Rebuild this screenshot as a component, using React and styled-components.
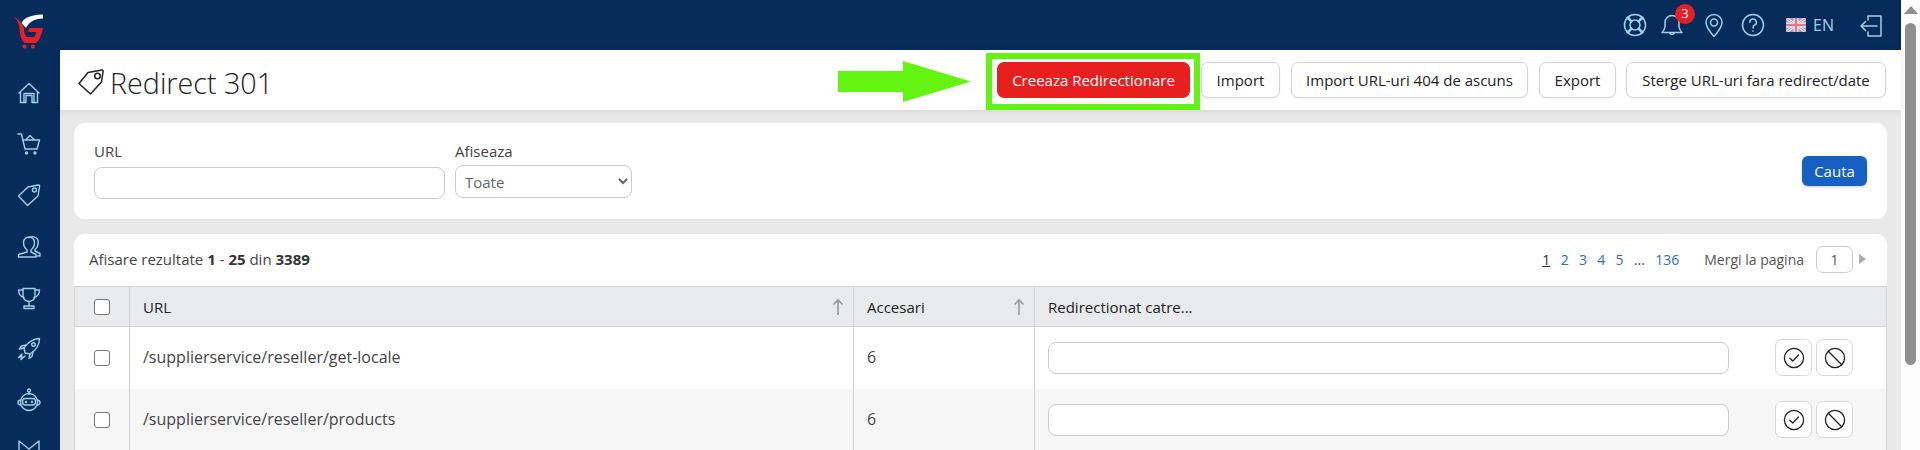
import React from "react";
import styled, { createGlobalStyle } from "styled-components";

const NAVY = "#072c5c";
const ICON = "#9fd0e6";

const Global = createGlobalStyle`
  html, body { margin: 0; padding: 0; height: 100%; overflow: hidden; }
  body { font-family: "Open Sans", "Liberation Sans", sans-serif; color: #333; background: #e9e9e9; }
  #root { height: 100%; }
  * { box-sizing: border-box; }
`;

const Shell = styled.div`display: flex; width: 1920px; height: 450px; overflow: hidden;`;
const Sidebar = styled.aside`width: 60px; flex: none; background: ${NAVY}; overflow: hidden; display: flex; flex-direction: column;`;
const LogoBox = styled.div`height: 50px; flex: none; padding: 14px 0 0 14px; svg { display: block; }`;
const Nav = styled.nav`padding-top: 17px; display: flex; flex-direction: column;`;
const NavItem = styled.a`
  height: 51.3px; flex: none; display: flex; align-items: center; justify-content: center; padding-right: 2px;
  svg { display: block; width: 24px; height: 24px; fill: none; stroke: ${ICON}; stroke-width: 1.4; stroke-linecap: round; stroke-linejoin: round; }
`;
const Main = styled.div`flex: 1; min-width: 0; display: flex; flex-direction: column; background: #e9e9e9;`;
const Header = styled.header`height: 50px; flex: none; background: ${NAVY}; display: flex; align-items: center; justify-content: flex-end; padding-right: 18px;`;
const HeadIcon = styled.span`
  position: relative; display: flex; margin-right: ${p => p.$mr}px;
  svg { display: block; width: ${p => p.$size || 24}px; height: ${p => p.$size || 24}px; fill: none; stroke: ${ICON}; stroke-width: 1.5; stroke-linecap: round; stroke-linejoin: round; }
`;
const Badge = styled.span`
  position: absolute; right: -11px; top: -9px; width: 20px; height: 20px; border-radius: 50%; background: #e81f25; color: #fff;
  font-size: 13px; line-height: 19px; text-align: center;
`;
const Lang = styled.span`display: flex; align-items: center; gap: 7px; color: ${ICON}; font-size: 16px; margin-right: 25px; svg { display: block; }`;

const TitleBar = styled.div`
  height: 60px; flex: none; background: #fff; display: flex; align-items: flex-start; padding: 3px 15px 0 18px;
  box-shadow: 0 2px 7px rgba(0,0,0,.07); position: relative;
`;
const Title = styled.h1`
  margin: 5px auto 0 0; height: 48px; display: flex; align-items: center; gap: 6px; font-size: 28.7px; font-weight: 300; color: #222; letter-spacing: 0;
  svg { display: block; fill: none; stroke: #222; stroke-width: 1.5; stroke-linejoin: round; }
`;
const GreenArrow = styled.svg`display: block; width: 133px; height: 41px; margin: 8px 15px 0 0; flex: none;`;
const Highlight = styled.div`
  width: 214px; height: 57px; flex: none; border: 6px solid #64f411; padding: 3px 0 0 5px; margin-right: 1px;
`;
const Btn = styled.button`
  height: 36px; padding: 0; width: ${p => p.$w}px; margin: ${p => p.$top ? "9px 0 0 " + (p.$ml || 0) + "px" : "0"};
  flex: none; font: 400 15px "Open Sans", sans-serif; color: ${p => p.$primary ? "#fff" : "#222"};
  background: ${p => p.$primary ? "#e81f1f" : "#fff"}; border: 1px solid ${p => p.$primary ? "#e81f1f" : "#d5d5d5"}; border-radius: 7px;
  box-shadow: ${p => p.$primary ? "none" : "0 1px 2px rgba(0,0,0,.05)"};
`;
const Content = styled.div`flex: 1; min-height: 0; padding: 13px 14px 0 14px; display: flex; flex-direction: column; gap: 15px;`;
const Card = styled.section`background: #fff; border-radius: 11px; flex: none;`;
const FilterCard = styled(Card)`height: 96px; padding: 18px 20px 0 20px; display: flex;`;
const Field = styled.label`display: flex; flex-direction: column; margin-right: 10px; font-size: 15px; color: #444;`;
const FieldLabel = styled.span`line-height: 20px; margin-bottom: ${p => p.$mb}px;`;
const TextInput = styled.input`
  display: block; width: ${p => p.$w}px; height: ${p => p.$h || 32}px; border: 1.5px solid #ccc; border-radius: 8px; background: #fff; outline: none;
`;
const Select = styled.select`
  width: 177px; height: 33px; border: 1.5px solid #ccc; border-radius: 8px; background: #fff; padding-left: 5px; outline: none;
  font: 400 15px "Open Sans", sans-serif; color: #666;
`;
const SearchBtn = styled.button`
  margin: 15px 0 0 auto; width: 65px; height: 30px; border: 0; border-radius: 6px; background: #1560c2; color: #fff;
  font: 400 15px "Open Sans", sans-serif; box-shadow: 0 1px 3px rgba(0,0,0,.2);
`;
const TableCard = styled(Card)`flex: 1; border-radius: 11px 11px 0 0; overflow: hidden; display: flex; flex-direction: column;`;
const Toolbar = styled.div`height: 52px; flex: none; display: flex; align-items: center; padding: 0 20px 2px 15px; font-size: 15px; color: #444;`;
const Summary = styled.div`margin-right: auto; b { font-weight: 700; color: #333; }`;
const Pages = styled.nav`display: flex; align-items: center; gap: 10.3px; font-size: 14px; margin-right: 25px;`;
const PageLink = styled.a`color: ${p => p.$active ? "#333" : "#2a70c8"}; text-decoration: ${p => p.$active ? "underline" : "none"};`;
const GoLabel = styled.span`font-size: 14px; color: #555; margin-right: 12px;`;
const GoInput = styled.span`
  width: 37px; height: 27px; border: 1.5px solid #ccc; border-radius: 7px; display: flex; align-items: center; justify-content: center; font-size: 14px; color: #555; margin-right: 6px;
`;
const NextTri = styled.span`width: 0; height: 0; border-left: 7px solid #aaa; border-top: 5px solid transparent; border-bottom: 5px solid transparent; margin-right: 1px;`;
const Table = styled.table`width: 100%; border-collapse: collapse; table-layout: fixed; border: 1.5px solid #d4d4d6; border-bottom: 0;`;
const HeadCell = styled.th`
  height: 40px; background: #e9eaec; font-weight: 400; font-size: 15px; color: #222; text-align: left; padding: 0 13px; border-top: 1.5px solid #d2d2d5; border-bottom: 1.5px solid #d2d2d5;
  border-right: 1.5px solid #d2d2d5; position: relative;
  &:last-child { border-right: 0; }
`;
const Cell = styled.td`
  height: 62px; font-size: 16px; color: #444; padding: 0 13px ${p => p.$text ? 2 : 0}px; border-right: 1.5px solid #d2d2d5; vertical-align: middle;
  &:last-child { border-right: 0; }
`;
const Row = styled.tr`background: ${p => p.$odd ? "#f6f6f6" : "#fff"};`;
const CheckCell = styled.div`display: flex; justify-content: flex-start; padding-left: 6px;`;
const Check = styled.span`display: block; width: 16px; height: 16px; border: 1.5px solid #777; border-radius: 3px; background: #fff;`;
const SortIcon = styled.svg`position: absolute; right: 9px; top: 11px; width: 12px; height: 18px; fill: none; stroke: #999; stroke-width: 1.6;`;
const ActionRow = styled.div`display: flex; align-items: center;`;
const RowInput = styled(TextInput)`margin-right: 46px; flex: none;`;
const IconBtn = styled.button`
  width: 37px; height: 37px; flex: none; margin-right: 4px; padding: 0; background: #fff; border: 1px solid #d8d8d8; border-radius: 7px; display: flex; align-items: center; justify-content: center;
  svg { display: block; width: 22px; height: 22px; fill: none; stroke: #222; stroke-width: 1.3; stroke-linecap: round; stroke-linejoin: round; }
`;
const Scrollbar = styled.div`width: 19px; flex: none; background: #fdfdfd; display: flex; flex-direction: column; align-items: center;`;
const ScrollUp = styled.span`width: 0; height: 0; margin-top: 6px; border-left: 7px solid transparent; border-right: 7px solid transparent; border-bottom: 8px solid #8f8f8f;`;
const ScrollThumb = styled.span`width: 11px; height: 342px; margin-top: 9px; border-radius: 6px; background: #8f8f8f;`;

const Logo = () => (
  <svg width="30" height="35" viewBox="0 0 30 35">
    <path d="M7.5 9.5C9 5 14 1 29 0.5V4.5C20 4.5 15.5 8 12 14C10.5 12 9 10.5 7.5 9.5Z" fill="#fff" />
    <path d="M0 3C3 6 5 9 5.5 14C6 22 8 29 12 29L22 29C25 27 28 20 29 14L15 14L14 18L22.5 18L20.5 23L14 23C11 23 10 18 10 14C9 9 4 5 0 3Z" fill="#e81f25" />
    <circle cx="10.5" cy="32.5" r="2" fill="#e81f25" /><circle cx="19" cy="32.5" r="2" fill="#e81f25" />
  </svg>
);

const navIcons = [
  <svg viewBox="0 0 24 24"><path d="M2 12 L12 2.5 L22 12 M3.5 10.5V21.5H9V14.5H15V21.5H20.5V10.5 M7 21.5V12.5H17V21.5" /></svg>,
  <svg viewBox="0 0 24 24"><path d="M1 2H4.5L8 17H20L22.5 8H5.5 M8.5 8L13 3.5L17.5 8" /><circle cx="9.5" cy="21" r="1" /><circle cx="18" cy="21" r="1" /></svg>,
  <svg viewBox="0 0 24 24"><path d="M11 4L21 2Q23 2 22.5 4L21 13L10.5 22.5L1.5 13Z" /><circle cx="17.5" cy="7" r="2" /></svg>,
  <svg viewBox="0 0 24 24"><path d="M10 15Q6.5 12 6.5 7.5A5.5 5.5 0 0 1 17.5 7.5Q17.5 12 14 15V17L19 19.5V22H1.5V19.5L10 17Z" /><path d="M12 2.5Q16 0.5 19.5 3Q22.5 6 20.5 11Q20 13 18 14.5V16L23 18.5V21H20" /></svg>,
  <svg viewBox="0 0 24 24"><path d="M6 2.5H18V9Q18 15 12 15.5Q6 15 6 9Z M6 4H1.5Q1.5 10 7 11.5 M18 4H22.5Q22.5 10 17 11.5 M12 15.5V19.5 M7 22.5H17V20H7Z" /></svg>,
  <svg viewBox="0 0 24 24"><path d="M8 16L7 11Q13 2 22.5 1.5Q22.5 11 13 17Z" /><circle cx="16.5" cy="7.5" r="1.8" /><path d="M7 11L2.5 12L4.5 9L9 8 M13 17L12 21.5L15 19.5L16 15 M5 17L1.5 20.5L5 19L4 22.5L8 19" /></svg>,
  <svg viewBox="0 0 24 24"><circle cx="12" cy="2.5" r="1.5" /><path d="M12 4V6.5" /><circle cx="12" cy="14" r="8.5" /><rect x="5.5" y="10.5" width="13" height="6.5" rx="3" /><path d="M3.5 12Q1 12.5 1 14.5Q1 16.5 3.5 17 M20.5 12Q23 12.5 23 14.5Q23 16.5 20.5 17" /><circle cx="9" cy="14" r=".5" /><circle cx="15" cy="14" r=".5" /></svg>,
  <svg viewBox="0 0 24 24"><path d="M2 1L12 9L22 1V18H2Z" /></svg>,
];

const UKFlag = () => (
  <svg width="20" height="14" viewBox="0 0 20 14">
    <rect width="20" height="14" fill="#8d9fc9" />
    <path d="M0 0L20 14M20 0L0 14" stroke="#f2eef2" strokeWidth="3" />
    <path d="M0 0L20 14M20 0L0 14" stroke="#d77d95" strokeWidth="1" />
    <path d="M10 0V14M0 7H20" stroke="#f2eef2" strokeWidth="5" />
    <path d="M10 0V14M0 7H20" stroke="#d77d95" strokeWidth="2.6" />
  </svg>
);

const CircleCheck = () => <svg viewBox="0 0 22 22"><circle cx="11" cy="11" r="9.6" /><path d="M6.8 11.2L9.8 14L15.5 8" /></svg>;
const Ban = () => <svg viewBox="0 0 22 22"><circle cx="11" cy="11" r="9.6" /><path d="M4.3 4.3L17.7 17.7" /></svg>;
const Sort = () => <SortIcon viewBox="0 0 12 18"><path d="M6 17V2M1.5 6.5L6 2L10.5 6.5" /></SortIcon>;

const rows = ["/supplierservice/reseller/get-locale", "/supplierservice/reseller/products"];

export default function App() {
  return (
    <Shell>
      <Global />
      <Sidebar>
        <LogoBox><Logo /></LogoBox>
        <Nav>{navIcons.map((ic, i) => <NavItem key={i}>{ic}</NavItem>)}</Nav>
      </Sidebar>
      <Main>
        <Header>
          <HeadIcon $mr={13}>
            <svg viewBox="0 0 24 24"><circle cx="12" cy="12" r="10.5" /><circle cx="12" cy="12" r="5" /><path d="M5 3.8L9 8.5M3.8 5L8.5 9M19 3.8L15 8.5M20.2 5L15.5 9M5 20.2L9 15.5M3.8 19L8.5 15M19 20.2L15 15.5M20.2 19L15.5 15" /></svg>
          </HeadIcon>
          <HeadIcon $mr={18}>
            <svg viewBox="0 0 24 24"><path d="M2 19.5H22Q19.5 17 19 14V9.5A7 7 0 0 0 5 9.5V14Q4.5 17 2 19.5Z M9.5 19.5A2.6 2.6 0 0 0 14.5 19.5" /></svg>
            <Badge>3</Badge>
          </HeadIcon>
          <HeadIcon $mr={15}>
            <svg viewBox="0 0 24 24"><path d="M12 23.5Q4 14.5 4 9.5A8 8 0 0 1 20 9.5Q20 14.5 12 23.5Z" /><circle cx="12" cy="9.5" r="3.5" /></svg>
          </HeadIcon>
          <HeadIcon $mr={21}>
            <svg viewBox="0 0 24 24"><circle cx="12" cy="12" r="10.5" /><path d="M8.8 9.2A3.3 3.3 0 1 1 13.6 12.2Q12 13 12 15" /><path d="M12 18V18.2" /></svg>
          </HeadIcon>
          <Lang><UKFlag />EN</Lang>
          <HeadIcon $mr={0}>
            <svg viewBox="0 0 24 24"><path d="M9 7V3H22V23H9V19 M2 13H18 M6.5 8.5L2 13L6.5 17.5" /></svg>
          </HeadIcon>
        </Header>
        <TitleBar>
          <Title>
            <svg width="26" height="26" viewBox="0 0 26 26"><path d="M10 3.5L24 1Q25.5 1 25 3L23.5 13L12.5 25L1 14.5Z" /><circle cx="19.5" cy="7" r="2.8" /></svg>
            Redirect 301
          </Title>
          <GreenArrow viewBox="0 0 133 41"><path d="M0 10H65V0L133 20.5L65 41V31H0Z" fill="#64f411" /></GreenArrow>
          <Highlight><Btn $primary $w={193}>Creeaza Redirectionare</Btn></Highlight>
          <Btn $top $w={79}>Import</Btn>
          <Btn $top $ml={11} $w={237}>Import URL-uri 404 de ascuns</Btn>
          <Btn $top $ml={11} $w={77}>Export</Btn>
          <Btn $top $ml={10} $w={260}>Sterge URL-uri fara redirect/date</Btn>
        </TitleBar>
        <Content>
          <FilterCard>
            <Field>
              <FieldLabel $mb={6}>URL</FieldLabel>
              <TextInput $w={351} />
            </Field>
            <Field>
              <FieldLabel $mb={4}>Afiseaza</FieldLabel>
              <Select defaultValue="Toate"><option>Toate</option></Select>
            </Field>
            <SearchBtn>Cauta</SearchBtn>
          </FilterCard>
          <TableCard>
            <Toolbar>
              <Summary>Afisare rezultate <b>1</b> - <b>25</b> din <b>3389</b></Summary>
              <Pages>
                <PageLink $active>1</PageLink>
                <PageLink>2</PageLink><PageLink>3</PageLink><PageLink>4</PageLink><PageLink>5</PageLink>
                <span>...</span>
                <PageLink>136</PageLink>
              </Pages>
              <GoLabel>Mergi la pagina</GoLabel>
              <GoInput>1</GoInput>
              <NextTri />
            </Toolbar>
            <Table>
              <colgroup><col width="55" /><col width="724" /><col width="181" /><col /></colgroup>
              <thead>
                <tr>
                  <HeadCell><CheckCell><Check /></CheckCell></HeadCell>
                  <HeadCell>URL<Sort /></HeadCell>
                  <HeadCell>Accesari<Sort /></HeadCell>
                  <HeadCell>Redirectionat catre...</HeadCell>
                </tr>
              </thead>
              <tbody>
                {rows.map((r, i) => (
                  <Row key={r} $odd={i % 2 === 1}>
                    <Cell><CheckCell><Check /></CheckCell></Cell>
                    <Cell $text>{r}</Cell>
                    <Cell $text>6</Cell>
                    <Cell>
                      <ActionRow>
                        <RowInput $w={681} />
                        <IconBtn><CircleCheck /></IconBtn>
                        <IconBtn><Ban /></IconBtn>
                      </ActionRow>
                    </Cell>
                  </Row>
                ))}
              </tbody>
            </Table>
          </TableCard>
        </Content>
      </Main>
      <Scrollbar><ScrollUp /><ScrollThumb /></Scrollbar>
    </Shell>
  );
}
